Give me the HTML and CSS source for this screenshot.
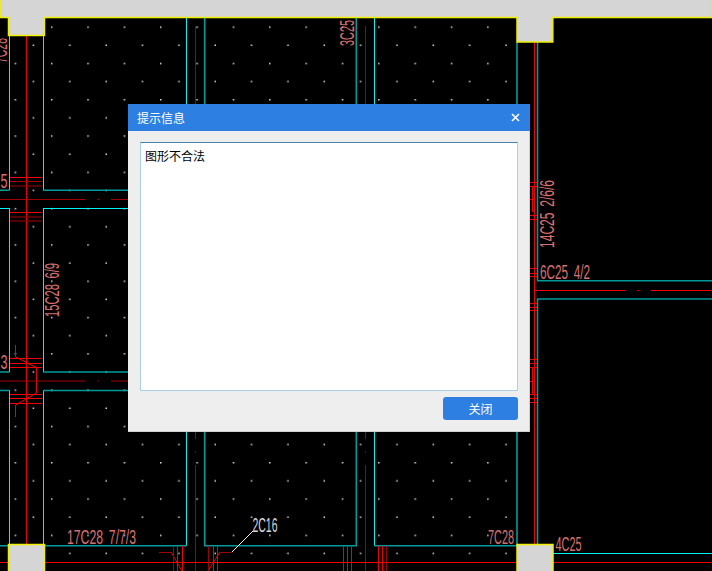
FILE: index.html
```html
<!DOCTYPE html>
<html lang="zh-CN">
<head>
    <meta charset="UTF-8">
    <meta name="viewport" content="width=device-width, initial-scale=1.0">
    <title>提示信息</title>
    <link rel="stylesheet" href="styles.css">
</head>
<body>
<div class="viewport">
    <svg class="drawing" width="712" height="571" viewBox="0 0 712 571">
        <defs>
            <pattern id="dots" patternUnits="userSpaceOnUse" x="14.6" y="26.4" width="36.35" height="36.3">
                <rect class="dot" x="0" y="0" width="1.5" height="1.5"/>
                <rect class="dot" x="18.17" y="18.15" width="1.5" height="1.5"/>
            </pattern>
        </defs>

        <!-- point grid -->
        <rect x="14" y="26" width="494" height="530" fill="url(#dots)"/>

        <!-- wall outlines -->
        <g class="cyan">
            <path d="M9.5 36V190M9.5 208V372M9.5 390V545"/>
            <path d="M43.5 36V190M43.5 208V372M43.5 390V545"/>
            <path d="M186.5 18V190M186.5 208V372M186.5 390V545"/>
            <path d="M374.5 18V190M374.5 208V372M374.5 390V545"/>
            <path d="M517 42V190M517 208V372M517 390V545"/>
            <path d="M553 553.5H712"/>
            <path d="M0 208.5H9M43 208.5H186M205 208.5H356M375 208.5H517"/>
        </g>
        <g class="teal">
            <path d="M204.7 18V190M204.7 208V372M204.7 390V546"/>
            <path d="M356.3 18V190M356.3 208V372M356.3 390V546"/>
            <path d="M537.5 42V280.7H712M537.5 571V299H712"/>
            <path d="M0 190.3H9.5M43 190.3H187M204 190.3H357M374 190.3H517"/>
            <path d="M0 372H9.5M43 372H187M204 372H357M374 372H517"/>
            <path d="M0 390.5H9.5M43 390.5H187M204 390.5H357M374 390.5H517"/>
            <path d="M0 545.7H187M204 545.7H357M374 545.7H517"/>
        </g>

        <!-- main bars -->
        <g class="red">
            <path d="M26.5 36V544"/>
            <path d="M534.5 42V544"/>
            <path d="M0 562.5H8M44 562.5H517M553 562.5H712"/>
            <path d="M534 290.5H625M651 290.5H712M637.5 290.5H639"/>
            <path d="M10 177.5H42M10 212.5H42"/>
            <path d="M10 358.5H42M10 363.5H42M10 367.5H42M10 394.5H42M10 398.5H42M10 403.5H42"/>
            <path d="M15.5 345V357L36.5 367.5V393L15.5 405V417"/>
            <path d="M530 182.5H537M530 186.5H537M530 215.5H537M530 219.5H537M530 268.5H537M530 273.5H537M530 276.5H537"/>
            <path d="M530 303.5H537M530 307.5H537M530 310.5H537M530 359.5H537M530 363.5H537M530 367.5H537M530 394.5H537M530 398.5H537M530 402.5H537"/>
            <path d="M532.5 187V212M530 199.5H534M532.5 368V394M530 381.5H534"/>
            <path d="M343.5 546V571M347.5 546V571M351.5 546V571"/>
            <path d="M378.5 546V571M382.5 546V571"/>
            <path d="M177.5 546V571M182.5 546V571M213.5 546V571M217.5 546V571"/>
            <path d="M171 552L182 571M220 552L208 571"/>
        </g>
        <g class="dark-red">
            <path d="M0 199.5H86M97.5 199.5H99M111 199.5H128"/>
            <path d="M0 381H86M97.5 381H99M111 381H128"/>
            <path d="M10 181.5H42M10 186H42M10 217H42M10 221H42"/>
            <path d="M195.5 26V439M195.5 451V452.5M195.5 465V571"/>
            <path d="M365.5 26V439M365.5 451V452.5M365.5 465V571"/>
            <path d="M173.5 546V571M208.5 546V571M386.5 546V571"/>
            <path d="M159 552.5H171M220 552.5H232"/>
        </g>

        <!-- leader -->
        <path class="leader" d="M232 552L253 531"/>

        <!-- column blocks -->
        <path class="block" d="M0 -2V17.5H8.5V35.5H44.5V17.5H517V42H552.8V17.5H712V-2Z"/>
        <rect class="block" x="8.5" y="544.5" width="36" height="30"/>
        <rect class="block" x="517" y="544.5" width="36" height="30"/>

        <!-- rebar labels -->
        <g class="label">
            <text x="0" y="0" textLength="25" lengthAdjust="spacingAndGlyphs" transform="translate(7 63) rotate(-90)">7C28</text>
            <text x="0.5" y="188" textLength="7" lengthAdjust="spacingAndGlyphs">5</text>
            <text x="0.5" y="369" textLength="7" lengthAdjust="spacingAndGlyphs">3</text>
            <text x="0" y="0" textLength="54" lengthAdjust="spacingAndGlyphs" transform="translate(59 317) rotate(-90)">15C28 6/9</text>
            <text x="0" y="0" textLength="26" lengthAdjust="spacingAndGlyphs" transform="translate(354 46) rotate(-90)">3C25</text>
            <text x="0" y="0" textLength="68" lengthAdjust="spacingAndGlyphs" transform="translate(554 248) rotate(-90)">14C25 2/6/6</text>
            <text x="540" y="279" textLength="50" lengthAdjust="spacingAndGlyphs">6C25 4/2</text>
            <text x="67" y="544" textLength="69" lengthAdjust="spacingAndGlyphs">17C28 7/7/3</text>
            <text x="488" y="544" textLength="26" lengthAdjust="spacingAndGlyphs">7C28</text>
            <text x="555.5" y="551" textLength="26" lengthAdjust="spacingAndGlyphs">4C25</text>
            <text class="label-white" x="252.5" y="532" textLength="25" lengthAdjust="spacingAndGlyphs">2C16</text>
        </g>
    </svg>

    <div class="dialog">
        <div class="dialog-title">
            <span>提示信息</span>
            <svg class="dialog-close" width="9" height="9" viewBox="0 0 9 9">
                <path d="M1 1L8 8M8 1L1 8"/>
            </svg>
        </div>
        <div class="dialog-body">
            <div class="message">图形不合法</div>
            <div class="dialog-actions">
                <button type="button">关闭</button>
            </div>
        </div>
    </div>
</div>
</body>
</html>
```

FILE: styles.css
```css
html, body {
    margin: 0;
    padding: 0;
    background: #000;
}
.viewport {
    position: relative;
    width: 712px;
    height: 571px;
    overflow: hidden;
    background: #000;
    font-family: "Noto Sans CJK SC", "Liberation Sans", sans-serif;
    font-size: 12px;
}
.drawing {
    display: block;
}
.dot {
    fill: #d8d8d8;
}
.cyan path {
    fill: none;
    stroke: #00f4f4;
    stroke-width: 1;
}
.teal path {
    fill: none;
    stroke: #009a9a;
    stroke-width: 1.6;
}
.red path {
    fill: none;
    stroke: #f00000;
    stroke-width: 1;
}
.dark-red path {
    fill: none;
    stroke: #a00000;
    stroke-width: 1;
}
.leader {
    fill: none;
    stroke: #f0f0f0;
    stroke-width: 1;
}
.block {
    fill: #d5d5d5;
    stroke: #f0f000;
    stroke-width: 1.5;
}
.label text {
    font-family: "Liberation Sans", sans-serif;
    font-size: 19.5px;
    font-weight: 400;
    word-spacing: 4px;
    fill: #d87070;
}
.label .label-white {
    fill: #d8d8d8;
}
.dialog {
    position: absolute;
    left: 128px;
    top: 104px;
    width: 402px;
    height: 328px;
    display: flex;
    flex-direction: column;
    box-sizing: border-box;
    background: #eeeeee;
    border-right: 1px solid #d0d0d0;
    border-bottom: 1px solid #d0d0d0;
}
.dialog-title {
    height: 27px;
    margin-right: -1px;
    padding: 0 10px 0 9px;
    display: flex;
    align-items: center;
    justify-content: space-between;
    flex-shrink: 0;
    background: #2d80e2;
    color: #fff;
}
.dialog-close path {
    fill: none;
    stroke: #fff;
    stroke-width: 1.6;
}
.dialog-body {
    flex: 1;
    padding: 11px 11px 11px 12px;
    display: flex;
    flex-direction: column;
    gap: 6px;
}
.message {
    flex: 1;
    padding: 5px 4px;
    background: #fff;
    color: #000;
    border: 1px solid #a9cfe9;
    border-top-color: #4a80ac;
    line-height: 16px;
}
.dialog-actions {
    display: flex;
    justify-content: flex-end;
}
button {
    width: 75px;
    height: 23px;
    padding: 0;
    border: none;
    border-radius: 3px;
    background: #2d80e2;
    color: #fff;
    font-family: inherit;
    font-size: 12px;
}
```
